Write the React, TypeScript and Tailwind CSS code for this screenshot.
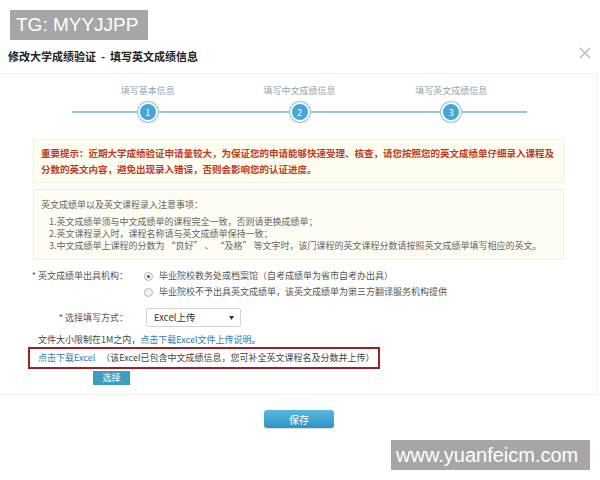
import React from "react";

const cjk = { fontFamily: '"Noto Sans CJK SC", "Noto Sans", sans-serif' };

function Step({ n, label }: { n: number; label: string }) {
  return (
    <div className="flex flex-1 flex-col items-center">
      <div className="text-[9px] leading-[12px] text-[#8fa7b3] whitespace-nowrap">{label}</div>
      <div className="mt-[5px] flex w-full items-center">
        <div className="h-[2px] flex-1 bg-[#93c6d3]" />
        <div className="flex h-[20px] w-[20px] items-center justify-center rounded-full border-2 border-white bg-[#45a6d8] text-[9px] leading-none text-white ring-1 ring-[#8cc6da]">
          {n}
        </div>
        <div className="h-[2px] flex-1 bg-[#93c6d3]" />
      </div>
    </div>
  );
}

function Radio({ checked }: { checked?: boolean }) {
  return (
    <span className="flex h-[9px] w-[9px] shrink-0 items-center justify-center rounded-full border border-[#b5b5b5] bg-[#f4f4f4]">
      {checked && <span className="h-[3px] w-[3px] rounded-full bg-[#555]" />}
    </span>
  );
}

export default function App() {
  return (
    <div className="relative h-[480px] w-[600px] overflow-hidden bg-white" style={cjk}>
      <div className="pl-[10px] pt-[10px]">
        <div
          className="h-[30px] w-[138px] bg-[#a6a6a6] pl-[6px] text-[19px] leading-[30px] text-white"
          style={{ fontFamily: '"Liberation Sans", Arial, sans-serif' }}
        >
          TG: MYYJJPP
        </div>
      </div>

      <div className="flex h-[33px] items-center justify-between pl-[8px] pr-[8px]">
        <div className="text-[11px] font-bold text-[#222]">修改大学成绩验证&nbsp;&nbsp;-&nbsp;&nbsp;填写英文成绩信息</div>
        <svg width="14" height="14" viewBox="0 0 14 14" className="-mt-[8px]">
          <path d="M2 2 L12 12 M12 2 L2 12" stroke="#bdbdbd" strokeWidth="1.6" />
        </svg>
      </div>

      <div className="mr-[2px] h-[322px] border-t border-r border-b border-[#f0f0f0]">
        <div className="ml-[72px] flex w-[455px] pt-[11px]">
          <Step n={1} label="填写基本信息" />
          <Step n={2} label="填写中文成绩信息" />
          <Step n={3} label="填写英文成绩信息" />
        </div>

        <div className="mx-[33px] mt-[17px] border border-[#f1f0de] bg-[#fdfdf0] px-[7px] pb-[5px] pt-[5px] text-[9.5px] font-bold leading-[16px] text-[#c23a22]">
          重要提示：近期大学成绩验证申请量较大，为保证您的申请能够快速受理、核查，请您按照您的英文成绩单仔细录入课程及
          <br />
          分数的英文内容，避免出现录入错误，否则会影响您的认证进度。
        </div>

        <div className="mx-[33px] mt-[6px] border border-[#f1f0de] bg-[#fdfdf3] px-[7px] pb-[7px] pt-[8px] text-[9px] text-[#666]">
          <div className="mb-[5px] leading-[13px]">英文成绩单以及英文课程录入注意事项：</div>
          <div className="pl-[8px] leading-[12px]">
            <div>1.英文成绩单须与中文成绩单的课程完全一致，否则请更换成绩单；</div>
            <div>2.英文课程录入时，课程名称请与英文成绩单保持一致；</div>
            <div>3.中文成绩单上课程的分数为 “良好” 、 “及格” 等文字时，该门课程的英文课程分数请按照英文成绩单填写相应的英文。</div>
          </div>
        </div>

        <div className="mt-[8px] flex text-[9px] leading-[16px] text-[#555]">
          <div className="w-[128px] text-right">*&nbsp;英文成绩单出具机构：</div>
          <div className="pl-[16px]">
            <div className="flex items-center gap-[6px]">
              <Radio checked />
              <span>毕业院校教务处或档案馆（自考成绩单为省市自考办出具）</span>
            </div>
            <div className="flex items-center gap-[6px]">
              <Radio />
              <span>毕业院校不予出具英文成绩单，该英文成绩单为第三方翻译服务机构提供</span>
            </div>
          </div>
        </div>

        <div className="mt-[8px] flex items-center text-[9px] text-[#555]">
          <div className="w-[128px] text-right">*&nbsp;选择填写方式：</div>
          <div className="ml-[18px] flex h-[19px] w-[95px] items-center justify-between rounded-[2px] border border-[#d4d4d4] bg-white pl-[7px] pr-[6px] text-[9.5px] text-[#333]">
            <span>Excel上传</span>
            <svg width="5" height="4" viewBox="0 0 5 4">
              <path d="M0 0 L5 0 L2.5 4 Z" fill="#333" />
            </svg>
          </div>
        </div>

        <div className="mt-[6px] pl-[38px] text-[9px] leading-[14px] text-[#444]">
          文件大小限制在1M之内，<span className="text-[#2f7db6]">点击下载Excel文件上传说明</span>。
        </div>

        <div className="ml-[28px] flex h-[22px] w-[352px] items-center border-2 border-[#a01e26] pl-[8px] text-[9px] text-[#444]">
          <span className="text-[#2f7db6]">点击下载Excel</span>
          <span className="ml-[6px]">（该Excel已包含中文成绩信息，您可补全英文课程名及分数并上传）</span>
        </div>

        <div className="ml-[93px] mt-[2px] flex h-[14px] w-[37px] items-center justify-center bg-[#3e9dbf] text-[9px] text-white">
          选择
        </div>
      </div>

      <div className="mt-[15px] flex justify-center pl-[-1px]">
        <div className="ml-[-2px] flex h-[18px] w-[70px] items-center justify-center rounded-[3px] bg-gradient-to-b from-[#58b8df] to-[#2e93c4] text-[10px] text-white shadow-[0_1px_1px_rgba(0,0,0,0.15)]">
          保存
        </div>
      </div>

      <div
        className="absolute left-[391px] top-[440px] flex h-[30px] w-[199px] items-center bg-[#a6a6a6] pl-[5px] text-[20px] text-white"
        style={{ fontFamily: '"Liberation Sans", Arial, sans-serif' }}
      >
        www.yuanfeicm.com
      </div>
    </div>
  );
}
